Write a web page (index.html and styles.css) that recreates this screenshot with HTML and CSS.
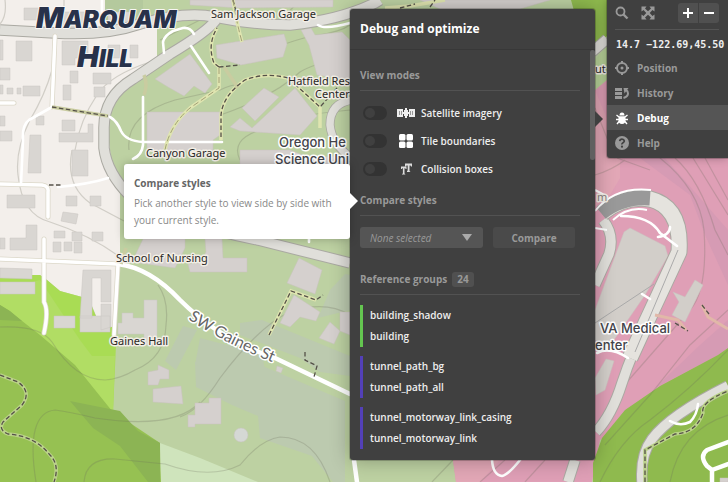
FILE: index.html
```html
<!DOCTYPE html>
<html lang="en">
<head>
<meta charset="utf-8">
<title>Style editor</title>
<link rel="stylesheet" href="styles.css">
</head>
<body>
<main class="workspace">
<svg class="map" viewBox="0 0 728 482" preserveAspectRatio="xMinYMin slice" role="img" aria-label="Map of Marquam Hill">
  <!-- land -->
  <rect width="728" height="482" fill="#bdd1a2"/>
  <path fill="#f3efeb" d="M0 0H105V9H143V0H157V60L118 95L106 120L112 165L120 180V264L116 330L97 318L92 306L82 297L60 291L47 280L40 275L0 276Z"/>
  <path fill="#bdd1a2" d="M105 0H190V10L157 26L130 28H105Z"/>
  <path fill="#b4c99d" d="M105 0H143V28H105Z"/>
  <path fill="#a9dc54" d="M0 275L40 275L47 280L60 291L82 297L92 307L98 321L116 329V345L113 412L0 305Z"/>
  <path fill="#b1dd64" d="M0 290L40 280L48 292L60 310L80 340L92 356L115 356L113 412L0 310Z"/>
  <path fill="#96c152" d="M8 310L40 335L75 365L112 411L160 443L161 482H0V305Z"/>
  <path fill="#8cb454" d="M0 305L10 311L22 321L0 320ZM70 401L120 411L138 431L160 443V482H148L120 446L93 428Z"/>
  <path fill="#cfe4bc" d="M160 443L200 458L258 482H161Z"/>
  <path fill="#bccaaf" d="M195 362L265 367L345 401V482H333L312 456L260 438L258 416L232 405L196 387ZM240 323L262 320L350 356V376L320 372L300 358L240 335ZM330 290L345 274L350 275V310L318 318ZM165 361L183 326L197 330L176 370ZM200 338L262 354L265 370L195 365Z"/>
  <path fill="#df9fb6" d="M453 460H592L595 90L607 75L728 60V350L600 440L592 482H456Z"/>
  <path fill="#e2a7b6" d="M595 90L620 150V178L610 195L595 206ZM453 460H500L480 482H456Z"/>
  <path fill="#d69bb4" d="M640 158L665 158L728 230V285L705 235L690 195ZM728 320V350L655 388L700 345Z"/>
  <path fill="#8fba4e" d="M571 0H607V36L592 50L578 25ZM728 348L718 355L660 386L625 410L602 438L593 463V482H728Z"/>
  <path fill="#b8d399" d="M595 60L607 45V80L595 90Z"/>
  <!-- contour lines -->
  <g fill="none" stroke="#6d6b5c" stroke-opacity=".25" stroke-width="1.2">
    <path d="M5 0Q7 16 0 24M64 0V28M52 70Q45 95 30 120Q15 150 18 175Q22 215 50 222Q90 235 120 257M75 150Q80 120 97 95Q110 75 150 62M72 150Q65 185 90 203L124 221"/>
    <path d="M129 150Q125 115 175 100L220 90Q230 85 240 84M160 40L200 20M172 140Q180 125 205 120Q270 100 300 72Q320 60 350 60M240 160Q230 140 260 130Q290 115 350 110M300 0L275 26M250 58Q290 40 318 35Q340 32 350 25"/>
    <path d="M0 327Q40 325 52 342Q75 380 105 380Q120 379 135 370Q165 358 166 325Q169 300 158 285M36 482Q25 413 55 410Q70 412 95 418Q175 430 200 402M84 482Q86 458 115 459L165 464Q210 480 240 465Q260 440 280 437Q315 437 330 482M180 417Q200 410 220 378Q260 325 290 312Q325 300 350 315"/>
    <path d="M595 175Q612 170 625 160M660 158Q700 190 704 230Q708 290 690 310L620 390M675 158Q700 180 715 230L728 255M693 158L728 215M705 158L728 200M728 310L690 345L650 395L605 445M728 350Q690 390 650 420Q620 440 600 482M728 415Q680 430 670 482M432 482L453 460M480 482L505 460M525 482L545 460M595 108L615 158M617 158L650 170"/>
  </g>
  <!-- buildings -->
  <g fill="#d9d6d2" stroke="#c9c5c1" stroke-width=".5">
    <path d="M24 8H44V20H24ZM62 12H88V30H62ZM108 12H130V28H108ZM16 41H32V61H16ZM0 40H3V60H0ZM62 41H88V58H75V65H62ZM108 45H120V58H108ZM130 45H138V58H130ZM0 68H10V80H0ZM70 71H78V83H70ZM93 73H111V84H93ZM94 87H105V97H94ZM0 85H3V94H0ZM7 88H13V94H7ZM17 88H21V94H17ZM23 86H40V96H23ZM63 85H71V100H63ZM0 116H5V126H0ZM36 116H44V125H36ZM62 120H75V131H62ZM59 133H88V124H93V142H59ZM0 131H12V141H0ZM30 135H41V173H28ZM72 150H88V176H72Z"/>
    <path d="M7 195H35V208H7ZM26 225H37V250H10V238H26ZM0 238H5V249H0ZM66 196H77V206H66ZM90 196H101V206H90ZM63 212L78 214L76 224L61 221ZM54 231H65V238H54ZM72 232H82V241H72ZM92 232H103V241H92ZM53 242H61V252H53ZM64 242H72V251H64ZM74 242H82V253H74ZM0 268L32 269V279L0 278ZM0 282H35V294H0ZM83 270H111V302H101V278H92V318H80ZM101 304H111V327L101 330ZM54 316H75V328H54ZM80 316H110V332H80ZM122 313H133V318H144V300H157V345H144V334H118V323H122Z"/>
  </g>
  <g fill="#d5d0ce" stroke="#c8c2be" stroke-width=".5">
    <path d="M190 0H333V7L240 8L190 5ZM155 79L190 54L212 84L205 93L194 86L184 96L168 87ZM216 45L284 34L287 44L283 57L241 65L217 58ZM147 112L220 112V135L213 140V151H147ZM301 30L311 28L315 35L342 32L350 40V80L317 75L309 45ZM242 108L264 88L279 97L255 121ZM230 127L240 118L252 128L295 88L317 116L300 135L240 131ZM240 150L290 150L310 158L350 155V166H240Z"/>
    <path d="M132 262L143 239H185V248L175 268ZM188 264L200 263L206 252L205 239H222L223 258H247V272H190ZM148 372L158 370V365L169 370V379H160L158 385H148ZM153 389L181 386L183 404L153 402ZM188 415H195V403H209V398H221V424H195V427H188ZM299 258L322 270L315 294L287 283ZM294 295L320 312L316 321L300 317L290 327L280 323ZM330 322L340 331L334 344L319 338ZM340 312L350 312V335L340 331ZM277 366L283 368L281 373L276 371Z"/>
    <circle cx="241" cy="435" r="7" fill="#d5d8d5"/>
    <path fill="#d2cec9" d="M630 228L665 246L668 256L645 295L607 350L595 340V310L624 232ZM673 292L685 297L695 280L703 285L685 322L672 315L679 302ZM606 359L614 361L605 390L596 395L595 378Z"/>
    <path fill="#d5d0ce" d="M420 0H550L520 9H440ZM720 478H728V482H720Z"/>
  </g>
  <!-- major roads -->
  <g fill="none" stroke-linejoin="round">
    <g stroke="#aaa9a2" stroke-width="11.500">
      <path d="M0 30L55 33Q105 36 140 24Q185 11 215 17Q255 25 290 25Q340 20 375 3L380 0"/>
      <path d="M216 20Q207 32 170 54L133 79Q103 97 104 130V148Q107 173 130 196Q180 225 258 240L350 263"/>
      <path d="M592 52L607 39M595 285L609 254Q615 235 603 220M596 432Q612 415 622 383Q632 352 650 316L679 252M642 482Q640 455 652 439Q670 415 728 386M568 482L575 460"/>
    </g>
    <g stroke="#e0dfda" stroke-width="9.500">
      <path d="M0 30L55 33Q105 36 140 24Q185 11 215 17Q255 25 290 25Q340 20 375 3L380 0"/>
      <path d="M216 20Q207 32 170 54L133 79Q103 97 104 130V148Q107 173 130 196Q180 225 258 240L350 263"/>
      <path d="M592 52L607 39M595 285L609 254Q615 235 603 220M596 432Q612 415 622 383Q632 352 650 316L679 252M642 482Q640 455 652 439Q670 415 728 386M568 482L575 460"/>
    </g>
    <path stroke="#aaa9a2" stroke-width="17" d="M602 213Q625 195 650 199Q682 207 679 252L645 325L630 358"/>
    <path stroke="#e5e3de" stroke-width="15" d="M602 213Q625 195 650 199Q682 207 679 252L645 325L630 358"/>
    <path stroke="#999" stroke-width="15" d="M601 213Q622 196 650 198"/>
    <path stroke="#fff" stroke-width="2" d="M595 211Q615 186 651 190M613 220Q628 206 647 210M595 228L607 230M595 190L608 197"/>
    <path stroke="#aaa" d="M678 250L635 352M595 323L654 284"/>
  </g>
  <!-- minor roads -->
  <g fill="none" stroke="#dcd8c9" stroke-width="5" stroke-linejoin="round" stroke-linecap="round">
    <path d="M55 36L52 107M0 103H14M0 184L42 185Q49 186 48 192V217M44 239V302Q49 310 44 333M0 259L118 264M118 265L114 335"/>
  </g>
  <g fill="none" stroke="#fff" stroke-width="3.500" stroke-linejoin="round" stroke-linecap="round">
    <path d="M55 36L52 107M0 103H14M0 184L42 185Q49 186 48 192V217M44 239V302Q49 310 44 333M0 259L118 264M118 265L114 335"/>
    <path stroke-width="4.500" d="M118 264Q150 268 180 300Q220 340 275 358L350 394M354 460L357 482"/>
    <path stroke-width="2.600" d="M52 107L29 120Q22 125 23 140L21 184M102 0V22M164 53L163 42Q164 36 173 31L183 28Q190 27 194 34M191 46L209 73M143 97V145Q142 155 133 159M110 117Q117 121 121 131Q126 141 143 142H222M58 187Q90 184 108 178M309 238V242M318 25Q325 30 350 23M492 460Q493 475 502 476Q508 475 520 460M621 216Q650 216 660 233L677 246M670 227Q670 235 658 237M642 294L650 299M597 353Q610 346 628 358M670 421Q680 427 690 422Q697 415 698 404"/>
    <path stroke-width="4.500" d="M728 442L707 450Q699 456 707 466L712 470L728 464M712 470V482"/>
  </g>
  <!-- oval drive beside the research center -->
  <path d="M352 100Q330 103 330 125Q332 145 352 158" fill="none" stroke="#aaa9a2" stroke-width="9"/>
  <path d="M352 100Q330 103 330 125Q332 145 352 158" fill="none" stroke="#e0dfda" stroke-width="7.500"/>
  <!-- footpaths -->
  <g fill="none" stroke="#dfe5b0" stroke-width="3.500">
    <path d="M165 150Q170 125 190 108L219 88V65M219 67L214 63Q207 45 217 28M233 0Q236 20 242 42M221 140V115Q223 95 245 80Q265 72 288 78L320 107M320 107V128M269 335L291 291L316 300M385 8L410 6L445 0"/>
    <path stroke="#c9cca0" d="M224 67L238 88M144 75Q148 85 144 95M126 248L121 264M52 107L108 116"/>
    <path stroke="#bbd28a" d="M0 375L18 382Q32 392 22 405L3 422Q-2 430 8 434Q35 436 50 455Q60 465 54 482M645 482V450L675 434Q696 433 703 413Q700 402 728 391"/>
    <path stroke="#e1b8a8" stroke-width="3" d="M655 315L678 320L686 330M702 305L708 317L728 329"/>
  </g>
  <g fill="none" stroke="#555149" stroke-width="1.300" stroke-dasharray="4.500 2.500">
    <path d="M219 67L214 63Q207 45 217 28M219 67L240 65M233 0L237 15M221 137V115Q223 95 245 80Q265 72 288 78L320 107L337 88M52 107L108 116M49 185H63M269 335L291 291L316 300L323 295M305 352V360L317 366L314 377M400 8L415 4M430 7L435 0"/>
    <path d="M0 375L18 382Q32 392 22 405L3 422Q-2 430 8 434Q35 436 50 455Q60 465 54 482M645 482V450L675 434Q696 433 703 413Q700 402 728 391M675 323L688 331M702 305L709 314"/>
  </g>
  <path d="M165 150Q170 125 190 108L219 88V65M233 0Q236 20 242 42" fill="none" stroke="#a3a076" stroke-dasharray="6 3"/>
  <!-- labels -->
  <g class="place">
    <text x="211" y="18">Sam Jackson Garage</text>
    <text x="146" y="157">Canyon Garage</text>
    <text x="116" y="262">School of Nursing</text>
    <text x="110" y="345">Gaines Hall</text>
    <text x="288" y="85">Hatfield Res</text>
    <text x="315" y="98">Center</text>
    <text x="595" y="73">ut</text>
    <text x="597" y="201" class="faint">m</text>
  </g>
  <g class="campus">
    <text x="279" y="147">Oregon He</text>
    <text x="275" y="164">Science Uni</text>
    <text x="600" y="333">VA Medical</text>
    <text x="595" y="350">enter</text>
  </g>
  <path id="gaines" d="M188 319Q230 347 290 369" fill="none"/>
  <text class="street"><textPath href="#gaines">SW Gaines St</textPath></text>
  <g class="district">
    <text x="36" y="28">M<tspan class="small">ARQUAM</tspan></text>
    <text x="77" y="67">H<tspan class="small">ILL</tspan></text>
  </g>
</svg>

<aside class="hint">
  <h2>Compare styles</h2>
  <p>Pick another style to view side by side with your current style.</p>
</aside>

<section class="panel">
  <header class="panel-head"><h1>Debug and optimize</h1></header>
  <div class="panel-body">
    <h2 class="heading">View modes</h2>
    <ul class="modes">
      <li><label class="mode"><input class="toggle" type="checkbox">
        <svg class="mode-icon" width="18" height="14" viewBox="0 0 18 14"><path fill="#eee" d="M0 3H6V6H7V4H8V2H10V4H11V6H12V3H18V11H12V8H11V10H10V12H8V10H7V8H6V11H0Z"/><path stroke="#999" d="M2.500 5V9M4.500 5V9M13.500 5V9M15.500 5V9"/></svg>
        <span>Satellite imagery</span></label></li>
      <li><label class="mode"><input class="toggle" type="checkbox">
        <svg class="mode-icon" width="18" height="14" viewBox="0 0 18 14"><g fill="#fff"><rect x="2" y="0" width="6.500" height="6.500" rx="1.500"/><rect x="9.500" y="0" width="6.500" height="6.500" rx="1.500"/><rect x="2" y="7.500" width="6.500" height="6.500" rx="1.500"/><rect x="9.500" y="7.500" width="6.500" height="6.500" rx="1.500"/></g></svg>
        <span>Tile boundaries</span></label></li>
      <li><label class="mode"><input class="toggle" type="checkbox">
        <svg class="mode-icon" width="18" height="14" viewBox="0 0 18 14"><path fill="#ddd" d="M8 1.500H15V4.500H14L13.500 3.500H12.500V9L13.500 10H10V9L10.700 8.500V3.500H9.500L9 4.500H8Z"/><path fill="#ddd" d="M4 4.500H9.500V7H8.700L8.300 6.200H7.500V11.500L8.500 12.500H5V12L5.900 11.500V6.200H5.200L4.800 7H4Z"/></svg>
        <span>Collision boxes</span></label></li>
    </ul>
    <h2 class="heading">Compare styles</h2>
    <div class="compare">
      <div class="picker"><select aria-label="Style to compare"><option>None selected</option></select>
        <svg class="caret" width="10" height="7" viewBox="0 0 10 7"><path fill="#aaa" d="M0 0H10L5 7Z"/></svg></div>
      <button type="button" class="compare-btn">Compare</button>
    </div>
    <h2 class="heading">Reference groups <span class="count">24</span></h2>
    <ul class="group group-green"><li>building_shadow</li><li>building</li></ul>
    <ul class="group"><li>tunnel_path_bg</li><li>tunnel_path_all</li></ul>
    <ul class="group"><li>tunnel_motorway_link_casing</li><li>tunnel_motorway_link</li></ul>
  </div>
  <div class="thumb"></div>
</section>

<nav class="dock">
  <div class="tools">
    <button type="button" class="tool" aria-label="Search"><svg width="14" height="14" viewBox="0 0 14 14"><g fill="none" stroke="#999"><circle cx="5.500" cy="5.500" r="4" stroke-width="1.800"/><path d="M8.500 8.500L12.500 12.500" stroke-width="2.400"/></g></svg></button>
    <button type="button" class="tool" aria-label="Full screen"><svg width="14" height="14" viewBox="0 0 14 14"><path fill="#999" d="M.5 .5H5.500L4 2.500L7 5.300L10 2.500L8.500 .5H13.500V5.500L11.500 4L8.700 7L11.500 10L13.500 8.500V13.500H8.500L10 11.500L7 8.700L4 11.500L5.500 13.500H.5V8.500L2.500 10L5.300 7L2.500 4L.5 5.500Z"/></svg></button>
    <div class="zoom">
      <button type="button" aria-label="Zoom in"><svg width="12" height="12" viewBox="0 0 12 12"><path stroke="#fff" stroke-width="2" d="M1 6H11M6 1V11"/></svg></button>
      <button type="button" aria-label="Zoom out"><svg width="12" height="12" viewBox="0 0 12 12"><path stroke="#fff" stroke-width="2" d="M1 6H11"/></svg></button>
    </div>
  </div>
  <div class="coords">14.7 −122.69,45.50</div>
  <a class="item" href="#position"><svg width="16" height="16" viewBox="0 0 16 16"><g fill="none" stroke="#999"><circle cx="8" cy="8" r="5" stroke-width="2"/><path stroke-width="2" d="M8 1V4M8 12V15M1 8H4M12 8H15"/></g><circle cx="8" cy="8" r="1.500" fill="#999"/></svg>Position</a>
  <a class="item" href="#history"><svg width="16" height="16" viewBox="0 0 16 16"><path fill="#999" d="M1 3H8V6H1ZM1 7H8V10H1ZM1 11H8V14H1Z"/><path fill="none" stroke="#999" stroke-width="2" d="M9.500 13Q14 11.500 14 8.500Q14 6 12 5"/><path fill="#999" d="M9.500 3H14.500L10.500 8.500Z"/></svg>History</a>
  <a class="item active" href="#debug"><svg width="16" height="16" viewBox="0 0 16 16"><path fill="#fff" d="M5.500 5.500Q5.500 2.500 8 2.500T10.500 5.500ZM4.500 6.300H11.500V10Q11.500 14 8 14T4.500 10Z"/><path stroke="#fff" stroke-width="1.400" fill="none" d="M2.500 5L5 7M13.500 5L11 7M2 9.500H14M3 14L5.500 11M13 14L10.500 11"/></svg>Debug</a>
  <a class="item" href="#help"><svg width="16" height="16" viewBox="0 0 16 16"><circle cx="8" cy="8" r="7" fill="#999"/><path fill="none" stroke="#404040" stroke-width="1.700" d="M5.700 6.200Q6 4.200 8 4.200T10.300 6Q10.300 7 9 7.700T8 9.500"/><circle cx="8" cy="11.700" r="1.100" fill="#404040"/></svg>Help</a>
</nav>
</main>
</body>
</html>
```
FILE: styles.css
```css
* { box-sizing: border-box; }
body { margin: 0; font-family: "Open Sans", "Noto Sans", sans-serif; font-size: 10px; color: #eee; }
h1, h2, p, ul { margin: 0; padding: 0; }
ul { list-style: none; }
button, select { font: inherit; color: inherit; border: 0; margin: 0; padding: 0; background: none; }
.workspace { position: relative; height: 100vh; overflow: hidden; background: #bdd1a2; }

.map { position: absolute; inset: 0; width: 100%; height: 100%; }
.map text { paint-order: stroke; stroke-linejoin: round; }
.place { font: 400 11px "Noto Sans", sans-serif; fill: #2a2825; stroke: #f2eee6; stroke-width: 3px; }
.faint { fill: #8b8080; }
.campus { font: 500 13px Inter, sans-serif; fill: #44444a; stroke: #fff; stroke-width: 3px; }
.street { font: 400 16px Lato, sans-serif; fill: #666; stroke: #fff; stroke-width: 3px; }
.district { font: italic 900 29px Inter, sans-serif; fill: #28324a; stroke: #f8f6f4; stroke-width: 2px; }
.small { font-size: 24px; }

.hint { position: absolute; z-index: 2; top: 164px; right: 378px; width: 226px; padding: 10px; border-radius: 3px; background: #fff; color: #888; box-shadow: 0 0 10px rgba(0, 0, 0, .25); }
.hint::after { content: ""; position: absolute; left: 100%; top: 29px; border: 8px solid transparent; border-left-color: #fff; border-right: 0; }
.hint h2 { font-size: 10px; line-height: 18px; color: #666; }
.hint p { line-height: 17px; padding: 3px 0 0; }

.panel { position: absolute; top: 9px; bottom: 22px; right: 133px; width: 245px; display: flex; flex-direction: column; border-radius: 3px; background: #404040; box-shadow: 0 0 0 1px rgba(0, 0, 0, .2), 0 0 20px rgba(0, 0, 0, .3); }
.panel::after { content: ""; position: absolute; left: 100%; top: 102px; border: 8px solid transparent; border-left-color: #404040; border-right: 0; }
.panel-head { height: 41px; padding: 0 10px; border-bottom: 1px solid #383838; }
.panel-head h1 { font-size: 12px; line-height: 40px; color: #fff; }
.panel-body { flex: 1; min-height: 0; overflow: hidden; padding: 10px 15px 0 10px; }
.heading { display: flex; align-items: center; gap: 5px; height: 31px; border-bottom: 1px solid #525252; font-size: 10px; color: #999; }
.count { padding: 0 5px; border-radius: 3px; background: #505050; line-height: 15px; }
.modes { padding: 8px 0 2px; font-weight: 600; }
.mode { display: flex; align-items: center; height: 28px; padding-left: 3px; }
.toggle { appearance: none; width: 24px; height: 14px; margin: 0 10px 0 0; padding: 2px; border-radius: 7px; background: #333; }
.toggle::before { content: ""; display: block; width: 10px; height: 10px; border-radius: 5px; background: #404040; }
.toggle:checked::before { margin-left: 10px; background: #999; }
.mode-icon { margin-right: 6px; }
.compare { display: flex; gap: 10px; padding: 11px 5px 16px 0; }
.picker { position: relative; flex: 3; }
.picker select { appearance: none; width: 100%; height: 21px; padding: 0 10px; border-radius: 3px; background: #555; color: #999; font-style: italic; }
.caret { position: absolute; right: 11px; top: 7px; pointer-events: none; }
.compare-btn { flex: 2; height: 21px; border-radius: 3px; background: #4a4a4a; color: #999; font-weight: 700; }
.group { margin-top: 9px; padding-left: 7px; border-left: 3px solid #5340b8; line-height: 21px; font-weight: 600; }
.group-green { margin-top: 10px; border-color: #64c550; }
.thumb { position: absolute; right: 0; top: 41px; width: 5px; height: 110px; border-radius: 3px; background: #606060; }

.dock { position: absolute; top: 0; right: 0; width: 121px; padding-bottom: 3px; background: #404040; border-radius: 0 0 0 3px; box-shadow: 0 0 0 1px rgba(0, 0, 0, .2), 0 0 10px rgba(0, 0, 0, .3); }
.tools { display: flex; align-items: center; gap: 12px; height: 30px; margin: 0 9px 0 8px; padding: 3px 0 6px; border-bottom: 1px solid #555; }
.tool { display: flex; width: 14px; }
.zoom { display: flex; gap: 1px; margin-left: auto; }
.zoom button { display: flex; align-items: center; justify-content: center; width: 20px; height: 20px; background: #505050; border-radius: 3px 0 0 3px; }
.zoom button + button { border-radius: 0 3px 3px 0; }
.coords { padding-left: 9px; height: 25px; font: 700 10px/29px "DejaVu Sans Mono", monospace; color: #eee; white-space: nowrap; }
.item { display: flex; align-items: center; gap: 7px; height: 25px; padding-left: 7px; color: #999; font-weight: 700; text-decoration: none; }
.item.active { background: #555; color: #fff; }
```
